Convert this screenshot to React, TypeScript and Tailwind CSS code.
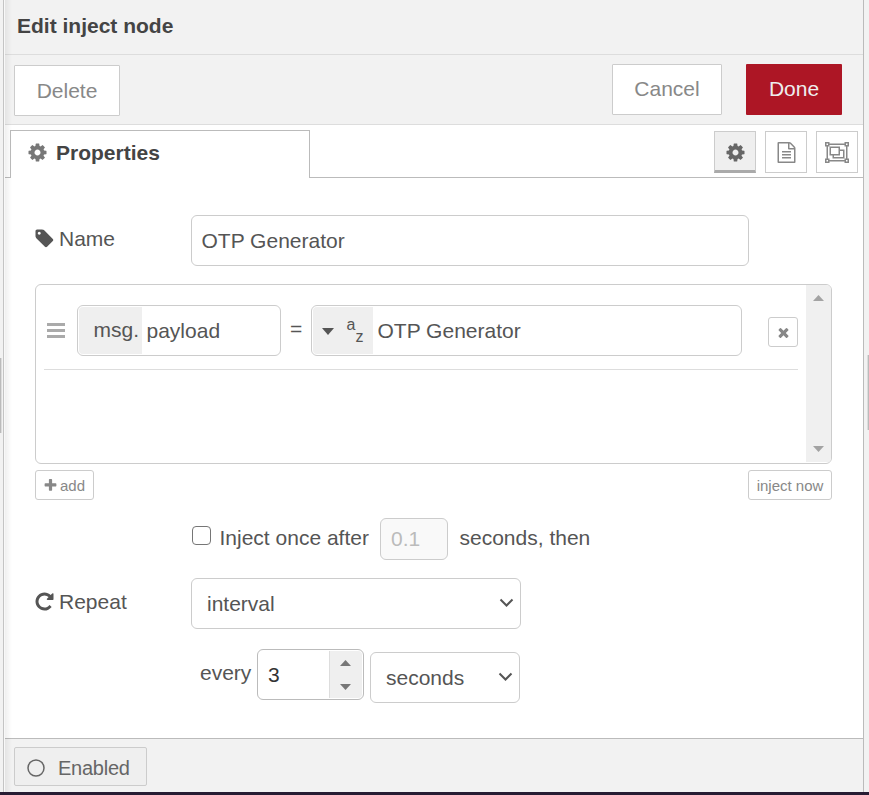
import React, { useState } from "react";

type IconProps = {
  className?: string;
  path: string;
  viewBox?: string;
};

const Icon = ({ className, path, viewBox = "0 0 1792 1792" }: IconProps) => (
  <svg className={className} viewBox={viewBox} fill="currentColor" aria-hidden="true">
    <path d={path} />
  </svg>
);

const COG =
  "M1152 896q0-106-75-181t-181-75-181 75-75 181 75 181 181 75 181-75 75-181zm512-109v222q0 12-8 23t-20 13l-185 28q-19 54-39 91 35 50 107 138 10 12 10 25t-9 23q-27 37-99 108t-94 71q-12 0-26-9l-138-108q-44 23-91 38-16 136-29 186-7 28-36 28h-222q-14 0-24.5-8.5t-11.5-21.5l-28-184q-49-16-90-37l-141 107q-10 9-25 9-14 0-25-11-126-114-165-168-7-10-7-23 0-12 8-23 15-21 51-66.5t54-70.5q-27-50-41-99l-183-27q-13-2-21-12.5t-8-23.5v-222q0-12 8-23t19-13l186-28q14-46 39-92-40-57-107-138-10-12-10-24 0-10 9-23 26-36 98.5-107.5t94.5-71.5q13 0 26 10l138 107q44-23 91-38 16-136 29-186 7-28 36-28h222q14 0 24.5 8.5t11.5 21.5l28 184q49 16 90 37l142-107q9-9 24-9 13 0 25 10 129 119 165 170 7 8 7 22 0 12-8 23-15 21-51 66.5t-54 70.5q26 50 41 98l183 28q13 2 21 12.5t8 23.5z";
const TAG =
  "M576 448q0-53-37.5-90.5t-90.5-37.5-90.5 37.5-37.5 90.5 37.5 90.5 90.5 37.5 90.5-37.5 37.5-90.5zm1067 576q0 53-37 90l-491 492q-39 37-91 37-53 0-90-37l-715-716q-38-37-64.5-101t-26.5-117v-416q0-52 38-90t90-38h416q53 0 117 26.5t102 64.5l715 714q37 39 37 91z";
const REPEAT =
  "M1664 256v448q0 26-19 45t-45 19h-448q-42 0-59-40-17-39 14-69l138-138q-148-137-349-137-104 0-198.5 40.5t-163.5 109.5-109.5 163.5-40.5 198.5 40.5 198.5 109.5 163.5 163.5 109.5 198.5 40.5q119 0 225-52t179-147q7-10 23-12 15 0 25 9l137 138q9 8 9.5 20.5t-7.5 22.5q-109 132-264 204.5t-327 72.5q-156 0-298-61t-245-164-164-245-61-298 61-298 164-245 245-164 298-61q147 0 284.5 55.5t244.5 156.5l130-129q29-31 70-14 39 17 39 59z";
const FILE_TEXT =
  "M1596 380q28 28 48 76t20 88v1152q0 40-28 68t-68 28h-1344q-40 0-68-28t-28-68v-1600q0-40 28-68t68-28h896q40 0 88 20t76 48zm-444-244v376h376q-10-29-22-41l-313-313q-12-12-41-22zm384 1528v-1024h-416q-40 0-68-28t-28-68v-416h-768v1536h1280zm-1024-864q0-14 9-23t23-9h704q14 0 23 9t9 23v64q0 14-9 23t-23 9h-704q-14 0-23-9t-9-23v-64zm736 224q14 0 23 9t9 23v64q0 14-9 23t-23 9h-704q-14 0-23-9t-9-23v-64q0-14 9-23t23-9h704zm0 256q14 0 23 9t9 23v64q0 14-9 23t-23 9h-704q-14 0-23-9t-9-23v-64q0-14 9-23t23-9h704z";
const OBJECT_GROUP =
  "M2048 384h-128v1024h128v384h-384v-128h-1280v128h-384v-384h128v-1024h-128v-384h384v128h1280v-128h384v384zm-256-256v128h128v-128h-128zm-1664 0v128h128v-128h-128zm128 1536v-128h-128v128h128zm1408-128v-128h128v-1024h-128v-128h-1280v128h-128v1024h128v128h1280zm256 128v-128h-128v128h128zm-640-1024h384v768h-1024v-256h-256v-768h896v256zm-768 384h640v-512h-640v512zm1024 256v-512h-256v384h-512v128h768z";
const PLUS =
  "M1600 736v192q0 40-28 68t-68 28h-416v416q0 40-28 68t-68 28h-192q-40 0-68-28t-28-68v-416h-416q-40 0-68-28t-28-68v-192q0-40 28-68t68-28h416v-416q0-40 28-68t68-28h192q40 0 68 28t28 68v416h416q40 0 68 28t28 68z";
const REMOVE =
  "M1490 1322q0 40-28 68l-136 136q-28 28-68 28t-68-28l-294-294-294 294q-28 28-68 28t-68-28l-136-136q-28-28-28-68t28-68l294-294-294-294q-28-28-28-68t28-68l136-136q28-28 68-28t68 28l294 294 294-294q28-28 68-28t68 28l136 136q28 28 28 68t-28 68l-294 294 294 294q28 28 28 68z";

// Small solid triangles used by the scrollbar, the spinner and the type menu
const Triangle = ({ className, up }: { className: string; up?: boolean }) => (
  <svg className={className} viewBox="0 0 12 6" preserveAspectRatio="none" fill="currentColor">
    <path d={up ? "M0 6 6 0l6 6z" : "M0 0h12L6 6z"} />
  </svg>
);

const Chevron = () => (
  <svg
    className="pointer-events-none -ml-[22px] mb-px h-[10px] w-[15px] shrink-0 text-[#555]"
    viewBox="0 0 15 10"
    fill="none"
    stroke="currentColor"
    strokeWidth="2"
  >
    <path d="M1.5 1.5l6 6 6-6" />
  </svg>
);

const Header = () => (
  <div className="h-[55px] border-b border-[#ddd] bg-[#f2f2f2] pl-3">
    <h1 className="font-bold leading-[52px] text-[#444]">Edit inject node</h1>
  </div>
);

const Toolbar = () => (
  <div className="flex h-[70px] items-start border-b border-[#ddd] bg-[#f2f2f2] pl-[9px] pr-[21px]">
    <button className="mt-[10px] h-[51px] w-[106px] rounded-[1px] border border-[#ccc] bg-white text-[#888]">
      Delete
    </button>
    <button className="ml-auto mt-[9px] h-[51px] w-[110px] rounded-[1px] border border-[#ccc] bg-white pb-[2px] text-[#888]">
      Cancel
    </button>
    <button className="ml-6 mt-[9px] h-[51px] w-24 rounded-[1px] bg-[#ad1625] pb-[2px] text-[#eee]">
      Done
    </button>
  </div>
);

const Tabs = () => (
  <div className="flex h-[53px] items-end">
    <div className="h-px w-[5px] bg-[#bbb]" />
    <div className="flex h-12 w-[300px] items-center border-x border-t border-[#bbb] bg-white pb-[3px] pl-4 font-bold text-[#444]">
      <Icon className="-mt-px h-[21px] w-[21px] text-[#777]" path={COG} />
      <span className="ml-2">Properties</span>
    </div>
    <div className="flex h-[53px] flex-1 justify-end gap-[9px] border-b border-[#bbb] pr-[5px] pt-[6px]">
      <button className="flex h-[42px] w-[42px] items-center justify-center border border-b-[3px] border-[#ccc] border-b-[#aaa] bg-[#efefef] text-[#666]">
        <Icon className="mt-[2px] h-[21px] w-[21px]" path={COG} />
      </button>
      <button className="flex h-[42px] w-[42px] items-center justify-center border border-[#ccc] bg-white text-[#888]">
        <Icon className="mt-px h-[21px] w-[21px]" path={FILE_TEXT} />
      </button>
      <button className="flex h-[42px] w-[42px] items-center justify-center border border-[#ccc] bg-white text-[#888]">
        <Icon className="mt-px h-[21px] w-6" path={OBJECT_GROUP} viewBox="0 0 2048 1792" />
      </button>
    </div>
  </div>
);

const PropertyList = () => (
  <div className="mt-[18px] flex h-[180px] w-[797px] overflow-hidden rounded-[6px] border border-[#ccc]">
    <div className="flex-1 pl-2 pr-2">
      <div className="flex h-[85px] items-start border-b border-[#ddd] pl-[3px] pt-5">
        <div className="mt-[18px] flex w-[18px] flex-col gap-[3px]">
          <span className="h-[3px] bg-[#aaa]" />
          <span className="h-[3px] bg-[#aaa]" />
          <span className="h-[3px] bg-[#aaa]" />
        </div>
        <div className="ml-3 flex h-[51px] w-[204px] rounded-[6px] border border-[#ccc] p-px">
          <span className="w-[63px] rounded-l-[4px] bg-[#efefef] pl-[14.5px] leading-[46px]">msg.</span>
          <input className="w-[130px] pl-[4.5px] outline-none" defaultValue="payload" />
        </div>
        <span className="ml-[9px] w-[21px] leading-[47px]">=</span>
        <div className="flex h-[51px] w-[431px] rounded-[6px] border border-[#ccc] p-px">
          <div className="flex w-[60px] items-start rounded-l-[4px] bg-[#efefef] pl-[9px]">
            <Triangle className="mt-[21px] h-[7px] w-3" />
            <span className="ml-[12.5px] mt-[13px] text-[16px] leading-[10px]">a</span>
            <span className="mt-[25px] text-[16px] leading-[10px]">z</span>
          </div>
          <input className="w-[360px] pl-[4.5px] outline-none" defaultValue="OTP Generator" />
        </div>
        <button className="ml-[26px] mt-3 flex h-[30px] w-[30px] items-center justify-center rounded-[3px] border border-[#ccc] text-[#888]">
          <Icon className="mt-px h-[15px] w-[15px]" path={REMOVE} />
        </button>
      </div>
    </div>
    <div className="mb-px flex w-[25px] flex-col items-center justify-between bg-[#f0f0f0] pb-[10px] pt-[10px] text-[#a3a3a3]">
      <Triangle className="h-[6px] w-[11px]" up />
      <Triangle className="h-[6px] w-[11px]" />
    </div>
  </div>
);

const Footer = () => (
  <div className="h-[54px] border-t border-[#bbb] bg-[#f2f2f2] pl-[9px] pt-2">
    <button className="flex h-[39px] w-[133px] items-center rounded-[2px] border border-[#ccc] bg-[#efefef] pl-3 text-[20px] tracking-[-0.25px] text-[#666]">
      <svg className="mt-[2px] h-[18px] w-[18px]" viewBox="0 0 18 18" fill="none" stroke="currentColor" strokeWidth="1.5">
        <circle cx="9" cy="9" r="8" />
      </svg>
      <span className="ml-[13px] mt-[2px]">Enabled</span>
    </button>
  </div>
);

export default function App() {
  const [once, setOnce] = useState(false);

  return (
    <div className="flex h-[795px] w-[869px] flex-col overflow-hidden bg-[#f2f2f2] font-['Liberation_Sans',Arial,sans-serif] text-[21px] text-[#555]">
      <div className="flex h-[792px]">
        <div className="flex w-[5px] items-start border-r border-[#f8f8f8]">
          <div className="mt-[358px] h-[75px] w-[2px] border-r border-[#ddd] bg-[#bbb]" />
          <div className="ml-px h-full w-px bg-[#c4c4c4]" />
        </div>
        <div className="relative flex w-[859px] flex-col border-r border-[#bbb] bg-white">
          <Header />
          <Toolbar />
          <Tabs />
          <div className="flex-1 pl-[30px] pt-[37px]">
            <div className="flex h-[51px]">
              <label className="flex w-[156px] items-start leading-[47px]">
                <Icon className="-ml-[1.5px] mt-[13px] h-[21px] w-[21px]" path={TAG} />
                <span className="ml-[4.5px]">Name</span>
              </label>
              <input
                className="w-[558px] rounded-[6px] border border-[#ccc] pl-[9.5px] outline-none"
                defaultValue="OTP Generator"
              />
            </div>

            <PropertyList />

            <div className="mt-[6px] flex w-[797px] justify-between text-[15px] text-[#888]">
              <button className="flex h-[30px] w-[59px] items-center rounded-[3px] border border-[#ccc] pl-[6.5px]">
                <Icon className="h-[15px] w-[15px]" path={PLUS} />
                <span className="ml-[2.5px] mt-[2px]">add</span>
              </button>
              <button className="h-[30px] w-[84px] rounded-[3px] border border-[#ccc] pt-[2px]">inject now</button>
            </div>

            <div className="mt-[18px] flex h-[42px] pl-[157px]">
              <input
                type="checkbox"
                className="mt-2 h-[19px] w-[19px] appearance-none rounded-[4px] border-[1.5px] border-[#767676]"
                checked={once}
                onChange={(e) => setOnce(e.target.checked)}
              />
              <span className="ml-[8.5px] w-[160.5px] leading-[39px]">Inject once after</span>
              <input
                className="w-[68px] rounded-[6px] border border-[#ccc] bg-[#f9f9f9] pl-[10px] text-[#bbb]"
                defaultValue="0.1"
                disabled={!once}
              />
              <span className="ml-[11.5px] leading-[39px]">seconds, then</span>
            </div>

            <div className="mt-[18px] flex h-[51px] items-center">
              <label className="flex w-[156px] items-center pb-[4px]">
                <Icon className="-ml-[1.5px] h-[21px] w-[21px]" path={REPEAT} />
                <span className="ml-[4.5px]">Repeat</span>
              </label>
              <select className="h-[51px] w-[330px] appearance-none rounded-[6px] border border-[#ccc] pl-[15px]">
                <option>interval</option>
              </select>
              <Chevron />
            </div>

            <div className="mt-5 flex pl-[165px]">
              <span className="w-[57px] leading-[47px]">every</span>
              <div className="flex h-[51px] w-[107px] rounded-[6px] border border-[#bbb] p-px">
                <input className="w-[70px] pl-[9px] text-[#333] outline-none" defaultValue="3" />
                <div className="flex flex-1 flex-col items-center justify-between rounded-r-[4px] border-l border-[#ddd] bg-[#efefef] pb-2 pr-[2px] pt-[9px] text-[#777]">
                  <Triangle className="h-[6px] w-[11px]" up />
                  <Triangle className="h-[6px] w-[11px]" />
                </div>
              </div>
              <div className="ml-[6px] mt-[3px] flex items-center">
                <select className="h-[51px] w-[150px] appearance-none rounded-[6px] border border-[#ccc] pl-[15px]">
                  <option>seconds</option>
                </select>
                <Chevron />
              </div>
            </div>
          </div>
          <Footer />
          {/* soft inner shadow along the tray edge */}
          <div className="pointer-events-none absolute inset-y-0 left-0 w-[7px] bg-linear-to-r from-black/6 to-transparent" />
        </div>
        <div className="flex w-[5px] justify-end">
          <div className="mt-[355px] h-[75px] w-[2px] border-l border-[#ddd] bg-[#bbb]" />
        </div>
      </div>
      <div className="h-[3px] bg-[#271c33]" />
    </div>
  );
}
